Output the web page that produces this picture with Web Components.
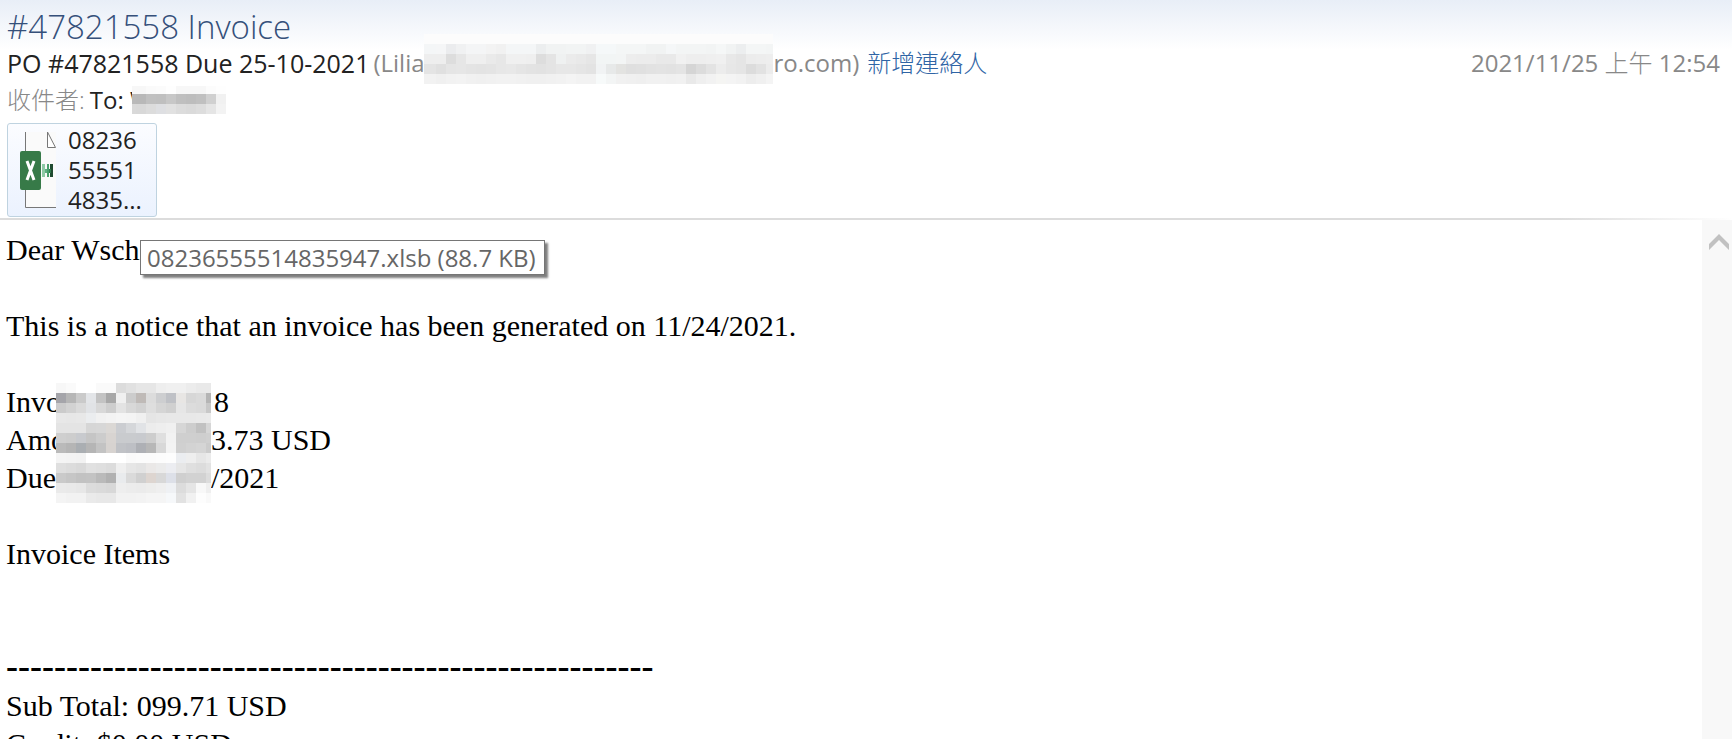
<!DOCTYPE html>
<html lang="zh-Hant">
<head>
<meta charset="utf-8">
<title>#47821558 Invoice</title>
<style>
  body {
    margin: 0;
    background: #fff;
    font-family: "Open Sans", "Noto Sans CJK TC", sans-serif;
    font-size: 24px;
  }
</style>
</head>
<body>
<mail-window></mail-window>

<script>
// Grid of 10px blocks covering private text. Rows are separated by "|",
// each token is a grey level (2 hex digits) or a full colour (6 digits).
class PixelMask extends HTMLElement {
  constructor() {
    super();
    this.attachShadow({ mode: 'open' });
  }

  connectedCallback() {
    const x = this.getAttribute('x') || 0;
    const y = this.getAttribute('y') || 0;
    const w = this.getAttribute('width');
    const h = this.getAttribute('height');
    const rows = this.getAttribute('rows').split('|');
    const rects = rows.map((row, r) => row.trim().split(/\s+/).map((c, i) => {
      const color = c.length === 2 ? c + c + c : c;
      return `<rect x="${i * 10}" y="${r * 10}" width="10" height="10" fill="#${color}"/>`;
    }).join('')).join('');
    this.shadowRoot.innerHTML = `
      <style>
        :host { display: block; flex: none; position: relative; }
        svg { display: block; }
      </style>
      <svg width="${w}" height="${h}" viewBox="${x} ${y} ${w} ${h}" shape-rendering="crispEdges" aria-hidden="true">${rects}</svg>
    `;
  }
}

class FileAttachment extends HTMLElement {
  constructor() {
    super();
    this.attachShadow({ mode: 'open' });
  }

  connectedCallback() {
    this.shadowRoot.innerHTML = `
      <style>
        :host {
          display: block;
          position: relative;
          width: 150px;
        }
        button {
          display: flex;
          align-items: center;
          gap: 12px;
          width: 100%;
          margin: 0;
          padding: 1px 12px;
          border: 1px solid #bfd3e0;
          border-radius: 3px;
          background: linear-gradient(#fbfcff, #ebf2fe);
          color: #222;
          font: inherit;
          line-height: 30px;
          text-align: left;
        }
        svg { flex: none; }
        .name { display: block; }
        .tip {
          position: absolute;
          z-index: 2;
          left: 133px;
          top: 117px;
          padding: 0 8px 0 6px;
          border: 1px solid #767676;
          background: #fff;
          box-shadow: 3px 3px 2px rgba(0, 0, 0, 0.5);
          color: #666;
          line-height: 33px;
          white-space: nowrap;
        }
      </style>
      <button type="button" aria-describedby="tip">
        <svg width="36" height="76" viewBox="0 0 36 76" aria-hidden="true">
          <rect x="5" y="0" width="31" height="76" fill="#fafafa"/>
          <path d="M5.500 0V75.500H36" fill="none" stroke="#777"/>
          <path d="M27.500 0V15.500H35.500Z" fill="#fff" stroke="#777"/>
          <rect x="22" y="32" width="3" height="13" fill="#8fc9a5"/>
          <rect x="25" y="37" width="5" height="4" fill="#5fae80"/>
          <rect x="27" y="32" width="2" height="13" fill="#49a06c"/>
          <rect x="30" y="32" width="3" height="13" fill="#1f4a30"/>
          <rect x="29" y="37" width="2" height="4" fill="#2f7a4c"/>
          <rect x="0" y="19" width="21" height="39" rx="2" fill="#377a48"/>
          <path d="M7 29L14 48M14 29L7 48" stroke="#fff" stroke-width="3" fill="none"/>
        </svg>
        <span class="name"><slot></slot></span>
      </button>
      <div class="tip" id="tip" role="tooltip"><slot name="tip"></slot></div>
    `;
  }
}

class MailHeader extends HTMLElement {
  constructor() {
    super();
    this.attachShadow({ mode: 'open' });
  }

  connectedCallback() {
    this.shadowRoot.innerHTML = `
      <style>
        :host {
          display: block;
          padding: 8px 12px 1px 7px;
          background: linear-gradient(#e8eef7, #fff 50px);
          color: #222;
        }
        h1 {
          margin: 0;
          color: #35507a;
          font-size: 33px;
          font-weight: 300;
          line-height: 38px;
        }
        .row {
          display: flex;
          align-items: center;
          height: 34px;
          margin-bottom: 3px;
          line-height: 34px;
          white-space: nowrap;
        }
        .from {
          margin-right: 4px;
          font-size: 25px;
        }
        .grey { color: #888; }
        .mail { width: 51px; }
        .mail + pixel-mask { margin-bottom: 8px; }
        .to { width: 42px; margin-left: 5px; }
        .cjk { font-weight: 300; }
        a {
          margin-left: 8px;
          color: #2f64a5;
          font-weight: 300;
          text-decoration: none;
        }
        time {
          margin-left: auto;
          color: #888;
        }
        .files {
          display: block;
          margin-top: 6px;
        }
      </style>
      <h1>#47821558 Invoice</h1>
      <div class="row">
        <span class="from">PO #47821558 Due 25-10-2021</span>
        <span class="grey mail">(Lilian</span>
        <pixel-mask x="8" width="349" height="50" rows="
          fc fc fc fc fc fc fc fc fc fc fc fc fc fc fc fc fc fc fc fc fc fc fc fc fc fc fc fc fc fc fc fc fc fc fc fc|
          f4f6f7 f4f6f7 f5f6f7 ebecee f0f1f2 f4f5f6 f4f5f6 f3 f1 f4f6f7 f4f6f7 f4f6f7 eceeef f1f3f3 f1f3f3 f2f4f4 f2f4f4 f0f1f2 f5f8f9 f5f8f9 f4f6f6 f4f6f6 f4f6f6 f1f3f3 f1f3f3 f5f7f8 f3f5f5 f3f5f5 f3f5f5 f2f4f4 f5f7f7 f1f3f3 eceeef f4f6f6 f4f6f6 f3f5f5|
          ee ee ee dd e6 ef ef ea e7 f0 f0 ef dd e4 eff1f1 eb e9 e6 f2f5f5 f2f5f5 f3f5f5 ed ec ec e9 e9 f1 ee ee ef f0 e8 e5 ec ed ee|
          e4 e4 e0 e5 e6 e4 e3 e4 e7 e8 e5 e3 e2 e4 e7 e7 e5 e3 f1f3f4 e7e9e9 e3e3e1 df e0 e2 e3 e2 e4 d5 dc e3 ec e7 e5 dc e2 ec|
          f2 f2 f0 f2 f3 f1 f0 f1 f2 f2 f1 f0 f0 f1 f2 f4 f2 f2 f7fafa f3f5f5 f1 f0 ef f1 f1 f0 f1 e9 ef f2 f5f5f3 f4 f2 ed f0 f4"></pixel-mask>
        <span class="grey">ro.com)</span>
        <a href="#contact">新增連絡人</a>
        <time datetime="2021-11-25T00:54">2021/11/25 <span class="cjk">上午</span> 12:54</time>
      </div>
      <div class="row">
        <span class="grey cjk">收件者:</span>
        <span class="to">To: W</span>
        <pixel-mask x="6" y="2" width="94" height="28" rows="
          f7 f7 fa fb fe f7 f7 f7 fc fe|
          b9 b8 c0 bf c7 bf bd c0 d0 f1|
          d9 d8 dc dedfe2 e1 dc da dd e5 f3"></pixel-mask>
      </div>
      <div class="files"><slot></slot></div>
    `;
  }
}

class MailBody extends HTMLElement {
  constructor() {
    super();
    this.attachShadow({ mode: 'open' });
  }

  connectedCallback() {
    this.shadowRoot.innerHTML = `
      <style>
        :host {
          display: flex;
          flex: 1;
          min-height: 0;
          border-top: 2px solid;
          border-image: linear-gradient(to right, #dcdcdc 90%, #fff) 1;
          color: #000;
          font-family: "Liberation Serif", serif;
          font-size: 30px;
          line-height: 38px;
        }
        article {
          flex: 1;
          min-width: 0;
          padding: 11px 6px 0;
          overflow: hidden;
        }
        p { margin: 0 0 38px; }
        .facts {
          display: grid;
          grid-template-columns: 50px max-content 1fr;
          grid-template-rows: repeat(3, 38px);
          grid-auto-flow: column;
          margin-bottom: 38px;
        }
        .facts pixel-mask {
          grid-row: 1 / 4;
          align-self: center;
          margin-top: 4px;
        }
        .pad { padding-left: 3px; }
        .items { margin-bottom: 76px; }
        .rule {
          margin: 0 0 4px;
          font-size: 36px;
          font-weight: bold;
          line-height: 34px;
        }
        .bar {
          width: 30px;
          background: #f8f8f8;
        }
        button {
          display: block;
          width: 100%;
          padding: 14px 0 0 7px;
          border: 0;
          background: none;
        }
        svg { display: block; }
      </style>
      <article>
        <p>Dear Wschi</p>
        <p>This is a notice that an invoice has been generated on 11/24/2021.</p>
        <div class="facts">
          <span>Invo</span><span>Amo</span><span>Due</span>
          <pixel-mask y="-1" width="155" height="121" rows="
            f7 fa ff ff fa fa dc e1 e6 e6 ee f0 f0 ec e9 e9|
            a5a5aa b6 ca e3e5e8 c3 a8 f0 cc bfbab7 dc cdced0 bfc1c6 e8e6e4 d7 da b5|
            cb d2 da e1e3e6 d8 ce e3 d8 d2 de d5 d0 e6 dc da c8|
            e8 e7 e8 ebedef f1 f3 f5 f4 f0 e5 e7 e8 e8 e8 e9 ea|
            e4 e4 e4 d6 d7 dbd8d5 cbcdd1 d5d7da e1e3e6 ec ee f0 d6 cd c1 d6|
            cf cd c8cace c5 cc d8d4d1 c9cbce c9cbce c8cace cd df f2 cf cf ce d0|
            ba b5 aaaeb2 b5 c3 d7d3d0 c0c2c6 bdbfc4 aeb0b5 b7 d8 f3 d0 d3 d5 cc|
            f4 f3 f2 ff ff ff ff fa fb fb fc fd ebedf0 ee e6 eb|
            df dc d9 e1 df dc ef e6 e3 eae8e7 eb ecedf1 e6 df dc e2|
            ca c6 c2 c3 ba b1 e9ebed da d0 ddd5d0 d8 dde0e8 cf d2 d2 dc|
            ea e9 e7 dc da d8 ee ec eb ededec ef eff1f4 dc e5 f8 ef|
            f4 f2 f2 ea e8 e8 f2 f2 f3 f5 f5 f6f8fa e2 f1 fd f9"></pixel-mask>
          <span class="pad">8</span><span>3.73 USD</span><span>/2021</span>
        </div>
        <p class="items">Invoice Items</p>
        <p class="rule">------------------------------------------------------</p>
        <div>Sub Total: 099.71 USD</div>
        <div>Credit: $0.00 USD</div>
      </article>
      <div class="bar">
        <button type="button" aria-label="Scroll up">
          <svg width="20" height="16" viewBox="0 0 20 16"><path d="M10 0L20 10V16L10 6L0 16V10Z" fill="#c1c1c1"/></svg>
        </button>
      </div>
    `;
  }
}

class MailWindow extends HTMLElement {
  constructor() {
    super();
    this.attachShadow({ mode: 'open' });
  }

  connectedCallback() {
    this.shadowRoot.innerHTML = `
      <style>
        :host {
          display: flex;
          flex-direction: column;
          height: 100vh;
          overflow: hidden;
        }
        .part { display: block; }
      </style>
      <mail-header>
        <file-attachment>
          <span class="part">08236</span>
          <span class="part">55551</span>
          <span class="part">4835...</span>
          <span slot="tip">08236555514835947.xlsb (88.7 KB)</span>
        </file-attachment>
      </mail-header>
      <mail-body></mail-body>
    `;
  }
}

customElements.define('pixel-mask', PixelMask);
customElements.define('file-attachment', FileAttachment);
customElements.define('mail-header', MailHeader);
customElements.define('mail-body', MailBody);
customElements.define('mail-window', MailWindow);
</script>
</body>
</html>
